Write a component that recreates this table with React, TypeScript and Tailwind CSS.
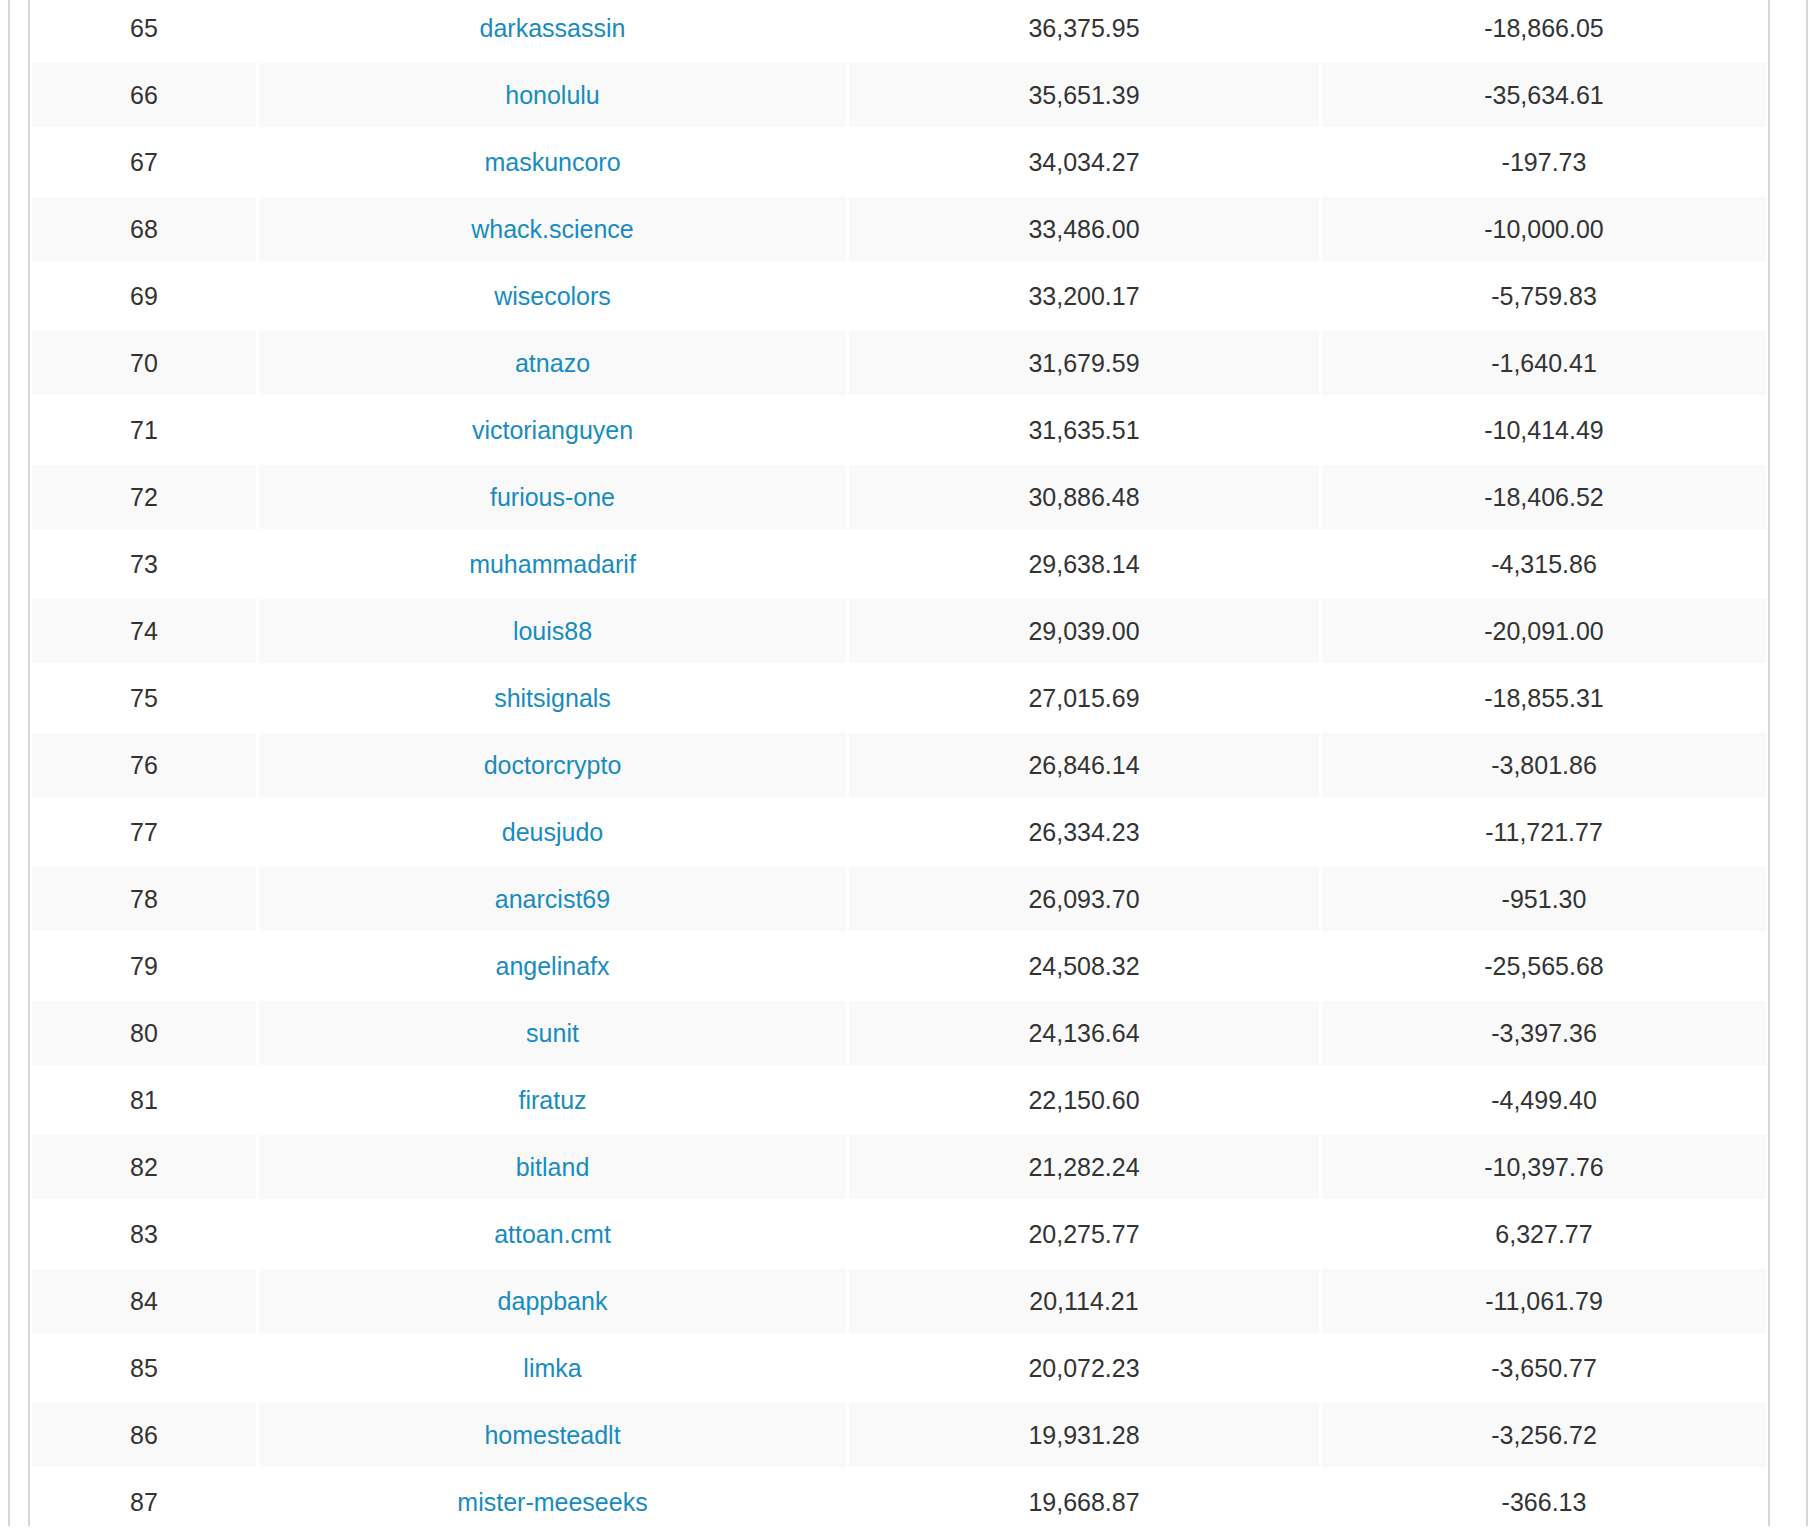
const rows: [number, string, string, string][] = [
  [65, 'darkassassin', '36,375.95', '-18,866.05'],
  [66, 'honolulu', '35,651.39', '-35,634.61'],
  [67, 'maskuncoro', '34,034.27', '-197.73'],
  [68, 'whack.science', '33,486.00', '-10,000.00'],
  [69, 'wisecolors', '33,200.17', '-5,759.83'],
  [70, 'atnazo', '31,679.59', '-1,640.41'],
  [71, 'victorianguyen', '31,635.51', '-10,414.49'],
  [72, 'furious-one', '30,886.48', '-18,406.52'],
  [73, 'muhammadarif', '29,638.14', '-4,315.86'],
  [74, 'louis88', '29,039.00', '-20,091.00'],
  [75, 'shitsignals', '27,015.69', '-18,855.31'],
  [76, 'doctorcrypto', '26,846.14', '-3,801.86'],
  [77, 'deusjudo', '26,334.23', '-11,721.77'],
  [78, 'anarcist69', '26,093.70', '-951.30'],
  [79, 'angelinafx', '24,508.32', '-25,565.68'],
  [80, 'sunit', '24,136.64', '-3,397.36'],
  [81, 'firatuz', '22,150.60', '-4,499.40'],
  [82, 'bitland', '21,282.24', '-10,397.76'],
  [83, 'attoan.cmt', '20,275.77', '6,327.77'],
  [84, 'dappbank', '20,114.21', '-11,061.79'],
  [85, 'limka', '20,072.23', '-3,650.77'],
  [86, 'homesteadlt', '19,931.28', '-3,256.72'],
  [87, 'mister-meeseeks', '19,668.87', '-366.13'],
];

export default function App() {
  return (
    <div
      className="h-[1533px] overflow-hidden bg-white text-[25px] text-[#333]"
      style={{ fontFamily: '"Liberation Sans", Arial, sans-serif' }}
    >
      <div className="ml-[8px] h-full w-[1800px] border-x-2 border-[#d6d6d6] pl-[18px] pr-[36px]">
        <div className="h-full border-x-2 border-[#d6d6d6]">
          <table className="-mx-px -mt-[7px] w-[1740px] table-fixed border-separate border-spacing-[3px]">
            <tbody>
              {rows.map(([rank, name, value, diff]) => {
                const striped = rank % 2 === 0;
                const cell = `h-[64px] p-0 text-center align-middle leading-none ${striped ? 'bg-[#f9f9f9]' : 'bg-white'}`;
                return (
                  <tr key={rank}>
                    <td className={`${cell} w-[224px]`}>{rank}</td>
                    <td className={`${cell} w-[587px]`}>
                      <a href="#" className="text-[#178cc0] no-underline">
                        {name}
                      </a>
                    </td>
                    <td className={`${cell} w-[470px]`}>{value}</td>
                    <td className={`${cell} w-[444px]`}>{diff}</td>
                  </tr>
                );
              })}
            </tbody>
          </table>
        </div>
      </div>
    </div>
  );
}
